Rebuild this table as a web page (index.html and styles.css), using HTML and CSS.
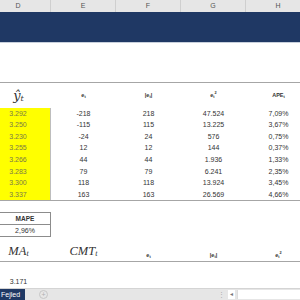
FILE: index.html
```html
<!DOCTYPE html>
<html>
<head>
<meta charset="utf-8">
<link rel="stylesheet" href="styles.css">
</head>
<body>
<div class="sheet">
  <div class="colhead">
    <div class="ch">D</div><div class="ch">E</div><div class="ch">F</div><div class="ch">G</div><div class="ch">H</div>
  </div>
  <div class="banner"></div>
  <div class="gap1"></div>

  <div class="table">
    <div class="row head">
      <div class="c yh"><span class="math">ŷ<sub>t</sub></span></div>
      <div class="c b">e<sub>t</sub></div>
      <div class="c b">|e<sub>t</sub>|</div>
      <div class="c b">e<sub>t</sub><sup>2</sup></div>
      <div class="c b">APE<sub>t</sub></div>
    </div>
    <div class="row data"><div class="c y">3.292</div><div class="c">-218</div><div class="c">218</div><div class="c">47.524</div><div class="c">7,09%</div></div>
    <div class="row data"><div class="c y">3.250</div><div class="c">-115</div><div class="c">115</div><div class="c">13.225</div><div class="c">3,67%</div></div>
    <div class="row data"><div class="c y">3.230</div><div class="c">-24</div><div class="c">24</div><div class="c">576</div><div class="c">0,75%</div></div>
    <div class="row data"><div class="c y">3.255</div><div class="c">12</div><div class="c">12</div><div class="c">144</div><div class="c">0,37%</div></div>
    <div class="row data"><div class="c y">3.266</div><div class="c">44</div><div class="c">44</div><div class="c">1.936</div><div class="c">1,33%</div></div>
    <div class="row data"><div class="c y">3.283</div><div class="c">79</div><div class="c">79</div><div class="c">6.241</div><div class="c">2,35%</div></div>
    <div class="row data"><div class="c y">3.300</div><div class="c">118</div><div class="c">118</div><div class="c">13.924</div><div class="c">3,45%</div></div>
    <div class="row data"><div class="c y">3.337</div><div class="c">163</div><div class="c">163</div><div class="c">26.569</div><div class="c">4,66%</div></div>
  </div>

  <div class="mape">
    <div class="mrow b">MAPE</div>
    <div class="mrow">2,96%</div>
  </div>

  <div class="row head2">
    <div class="c"><span class="math">MA<sub>t</sub></span></div>
    <div class="c"><span class="math">CMT<sub>t</sub></span></div>
    <div class="c b">e<sub>t</sub></div>
    <div class="c b">|e<sub>t</sub>|</div>
    <div class="c b">e<sub>t</sub><sup>2</sup></div>
  </div>
  <div class="row last"><div class="c">3.171</div></div>

  <div class="tabs">
    <div class="tab">Fejled</div>
    <div class="plus">+</div>
    <div class="spacer"></div>
    <div class="dots">⋮</div>
    <div class="arrow">◂</div>
    <div class="scroll"></div>
  </div>
</div>
</body>
</html>
```
FILE: styles.css
```css
* { box-sizing: border-box; }
html, body { margin: 0; padding: 0; background: #fff; overflow: hidden; }
body { width: 300px; height: 300px; font-family: "Liberation Sans", Arial, sans-serif; color: #333; }
.sheet { width: 300px; height: 300px; display: flex; flex-direction: column; }
.colhead { height: 12px; background: #e6e6e6; display: grid; grid-template-columns: 65px 65px 65px 65px 65px; margin-left: -14px; width: 325px; }
.ch { font-size: 7px; color: #555; text-align: center; line-height: 12px; border-right: 1px solid #cfcfcf; }
.banner { height: 31px; background: #1f3864; border-bottom: 1px solid #c8d0dc; }
.gap1 { height: 39px; }
.table { border-top: 1px solid #a6a6a6; border-bottom: 1px solid #a6a6a6; }
.row { display: grid; grid-template-columns: 65px 65px 65px 65px 65px; margin-left: -14px; width: 325px; }
.c { text-align: center; font-size: 7px; }
.head { height: 25px; align-items: center; }
.data { height: 11.6px; line-height: 11.6px; }
.y { background: #ffff00; color: #7a7a48; border-right: 1px solid #bdbdbd; }
.b { font-weight: bold; font-size: 5.5px; }
.math { font-family: "DejaVu Serif", "Liberation Serif", serif; font-style: italic; font-size: 13px; color: #333; font-weight: normal; }
.math sub { font-size: 8px; }
sub { font-size: 70%; vertical-align: -1px; }
sup { font-size: 70%; vertical-align: 3px; }
.mape { margin-top: 11px; width: 51px; border-top: 1px solid #8c8c8c; border-right: 1px solid #8c8c8c; }
.mrow { height: 12px; line-height: 12px; text-align: center; font-size: 7px; border-bottom: 1px solid #8c8c8c; }
.mrow.b { font-size: 6.5px; }
.head2 { margin-top: 6px; height: 19px; align-items: end; border-bottom: 1px solid #a6a6a6; padding-bottom: 2px; }
.head2 .math { font-family: "Liberation Serif", serif; font-size: 12.5px; }
.head2 .math sub { font-size: 8px; }
.last { height: 26px; align-items: end; padding-bottom: 3px; }
.tabs { height: 12px; background: #e6e6e6; display: flex; align-items: center; border-top: 1px solid #d4d4d4; }
.tab { background: #1f3864; color: #fff; font-size: 7px; height: 11px; line-height: 11px; padding: 0 3px 0 1px; width: 25px; overflow: hidden; }
.plus { margin-left: 14px; width: 9px; height: 9px; border-radius: 50%; border: 1px solid #c6c6c6; color: #b0b0b0; font-size: 7px; line-height: 7px; text-align: center; }
.spacer { flex: 1; }
.dots { font-size: 7px; color: #aaa; width: 8px; text-align: center; }
.arrow { font-size: 6px; color: #777; background: #fff; width: 7px; height: 9px; line-height: 9px; text-align: center; margin-left: 3px; }
.scroll { width: 63px; height: 9px; background: #fff; margin-left: 2px; border-left: 1px solid #ddd; }
```
